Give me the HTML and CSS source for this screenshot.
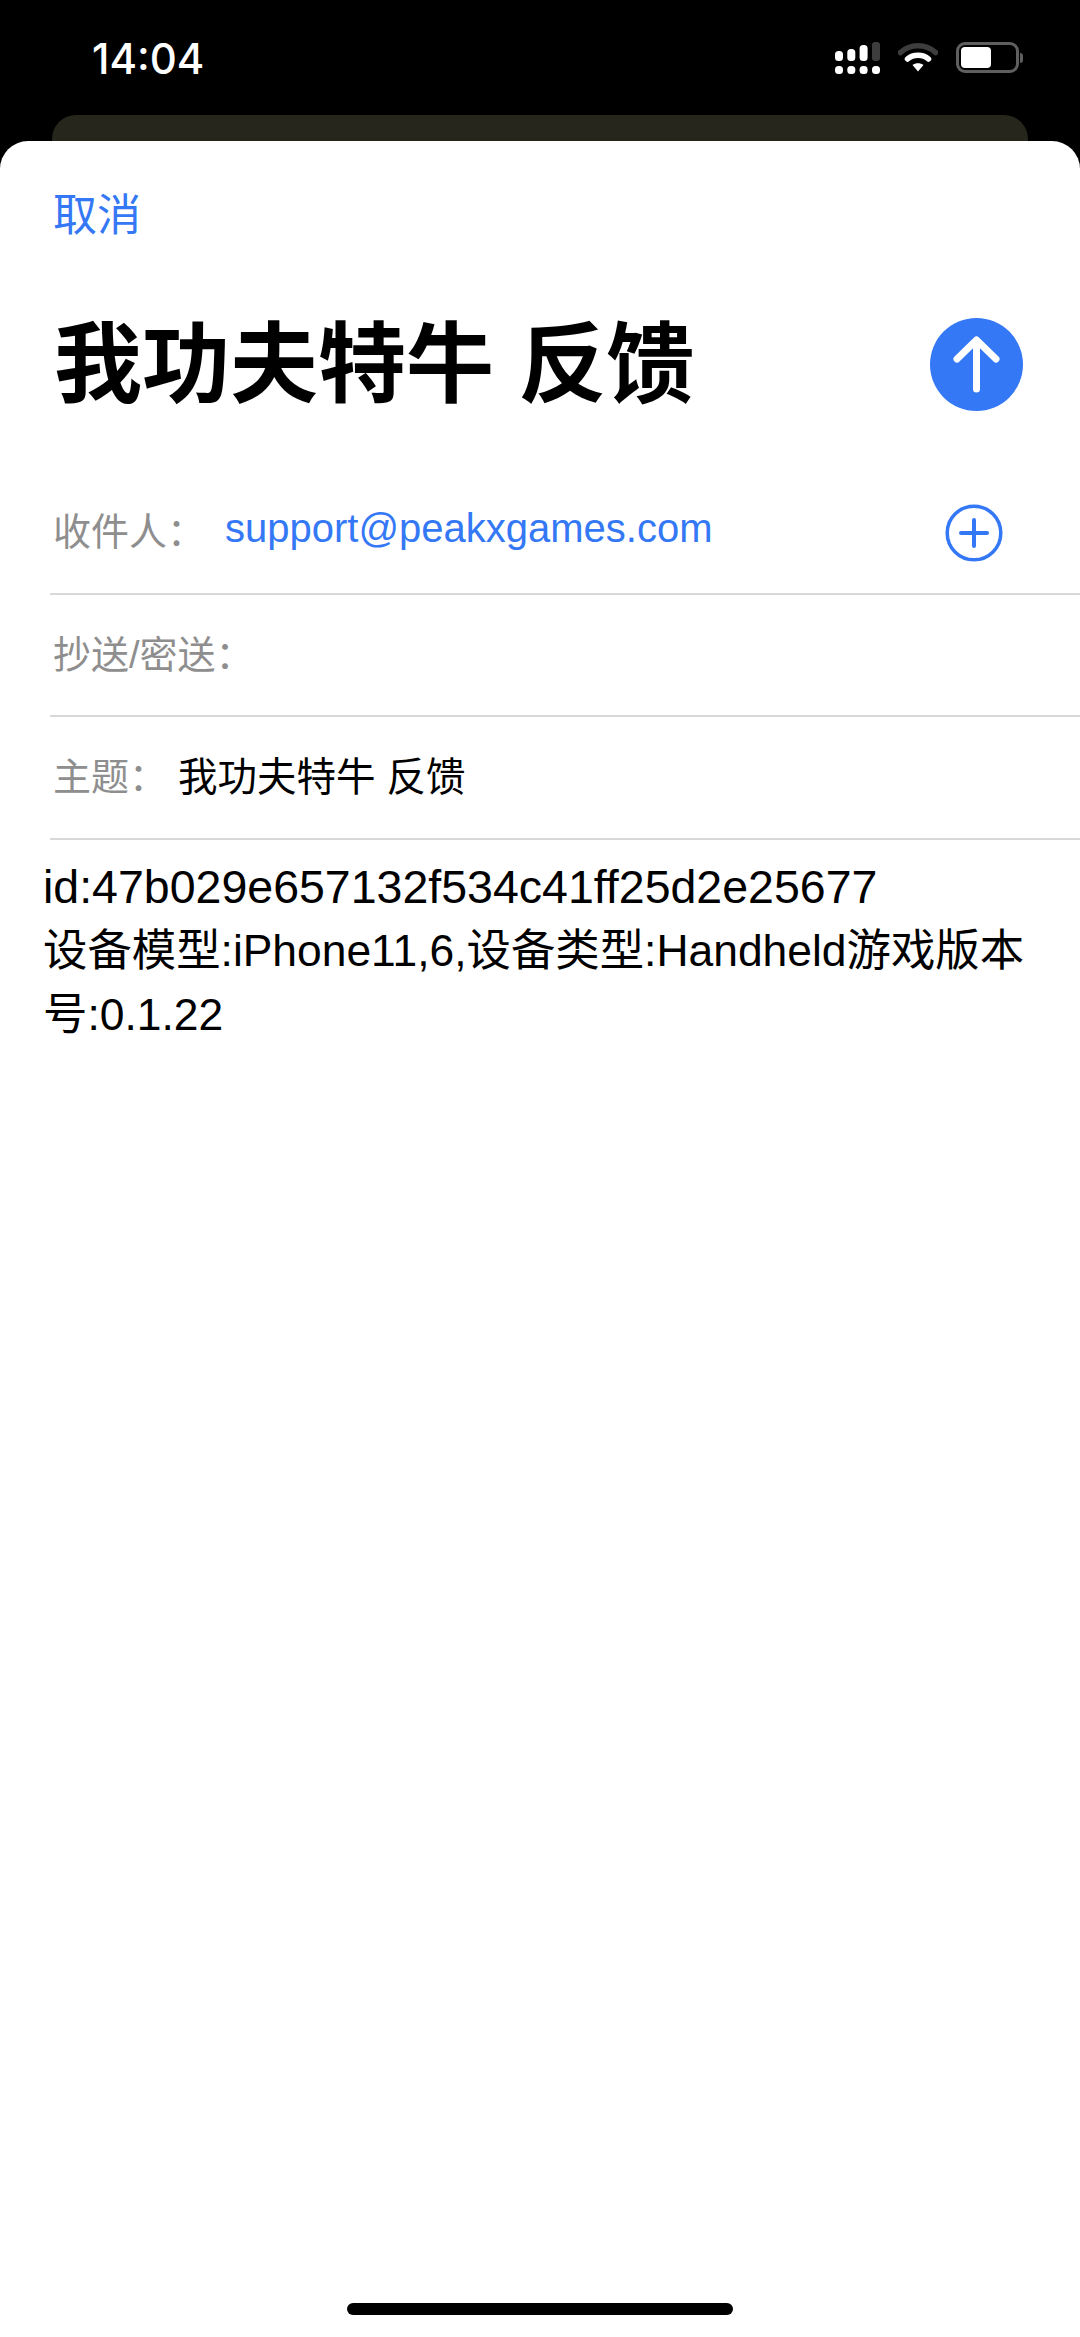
FILE: index.html
```html
<!DOCTYPE html>
<html lang="zh-CN">
<head>
  <meta charset="UTF-8">
  <meta name="viewport" content="width=device-width, initial-scale=1">
  <title>我功夫特牛 反馈</title>
  <link rel="stylesheet" href="styles.css">
</head>
<body>
  <div class="status-bar">
    <span class="clock">14:04</span>
    <div class="status-icons">
      <svg class="signal" width="45" height="32" viewBox="0 0 45 32">
        <rect x="0" y="9" width="8" height="10" rx="3.5" fill="#fff"/>
        <rect x="12.300" y="7" width="8" height="12" rx="3.5" fill="#fff"/>
        <rect x="24.600" y="3" width="8" height="16" rx="3.5" fill="#fff"/>
        <rect x="37" y="0" width="8" height="19" rx="3" fill="#3d3d3d"/>
        <rect x="0" y="24" width="8" height="8" rx="3.5" fill="#fff"/>
        <rect x="12.300" y="24" width="8" height="8" rx="3.5" fill="#fff"/>
        <rect x="24.600" y="24" width="8" height="8" rx="3.5" fill="#fff"/>
        <rect x="37" y="24" width="8" height="8" rx="3.5" fill="#fff"/>
      </svg>
      <svg class="wifi" width="40" height="30" viewBox="0 0 40 30">
        <path d="M2.500 10.500 C12 1.500 28 1.500 37.500 10.500" fill="none" stroke="#3d3d3d" stroke-width="5.500" stroke-linecap="round"/>
        <path d="M9.500 17 C15 12 25 12 30.500 17" fill="none" stroke="#fff" stroke-width="5.500" stroke-linecap="round"/>
        <path d="M14.500 23 C17.500 20.500 22.500 20.500 25.500 23 L20 29.500 Z" fill="#fff"/>
      </svg>
      <div class="battery">
        <div class="battery-body"><div class="battery-level"></div></div>
        <div class="battery-cap"></div>
      </div>
    </div>
  </div>

  <div class="back-card"></div>

  <div class="sheet">
    <div class="cancel">取消</div>

    <div class="title-row">
      <h1>我功夫特牛 反馈</h1>
      <svg class="send" width="93" height="93" viewBox="0 0 93 93">
        <circle cx="46.500" cy="46.500" r="46.500" fill="#3478f6"/>
        <path d="M46.500 71V24M27 41L46.500 22L66 41" fill="none" stroke="#fff" stroke-width="7" stroke-linecap="round" stroke-linejoin="round"/>
      </svg>
    </div>

    <div class="field field-to">
      <span class="label">收件人：</span>
      <span class="address">support@peakxgames.com</span>
      <svg class="add" width="58" height="58" viewBox="0 0 58 58">
        <circle cx="29" cy="29" r="26.800" fill="none" stroke="#3478f6" stroke-width="3.500"/>
        <path d="M29 16V42M16 29H42" fill="none" stroke="#3478f6" stroke-width="4" stroke-linecap="round"/>
      </svg>
    </div>
    <div class="field">
      <span class="label">抄送/密送：</span>
    </div>
    <div class="field">
      <span class="label">主题：</span>
      <span class="subject">我功夫特牛 反馈</span>
    </div>

    <div class="message">
      <div class="device-id">id:47b029e657132f534c41ff25d2e25677</div>
      <div>设备模型:iPhone11,6,设备类型:Handheld游戏版本号:0.1.22</div>
    </div>

    <div class="home-bar"></div>
  </div>
</body>
</html>
```

FILE: styles.css
```css
html, body {
  margin: 0;
  height: 100%;
}
body {
  width: 1080px;
  height: 2337px;
  overflow: hidden;
  background: #000;
  font-family: "Liberation Sans", "Noto Sans CJK SC", sans-serif;
  display: flex;
  flex-direction: column;
}
.status-bar {
  height: 115px;
  flex-shrink: 0;
  box-sizing: border-box;
  padding: 35px 57px 0 92px;
  display: flex;
  justify-content: space-between;
  align-items: flex-start;
}
.clock {
  color: #fff;
  font-size: 42px;
  line-height: 48px;
  font-weight: 500;
  font-family: "Inter", "Liberation Sans", sans-serif;
}
.status-icons {
  display: flex;
  align-items: flex-start;
  gap: 18px;
  padding-top: 7px;
}
.battery {
  display: flex;
  align-items: center;
}
.battery-body {
  width: 63px;
  height: 31px;
  box-sizing: border-box;
  border: 3px solid #5f5f5f;
  border-radius: 9px;
  padding: 2px;
}
.battery-level {
  width: 30px;
  height: 100%;
  background: #fff;
  border-radius: 4px;
}
.battery-cap {
  width: 3px;
  height: 10px;
  background: #5f5f5f;
  border-radius: 0 3px 3px 0;
  margin-left: 1px;
}
.back-card {
  height: 26px;
  flex-shrink: 0;
  margin: 0 52px;
  background: #26261c;
  border-radius: 24px 24px 0 0;
}
.sheet {
  flex: 1;
  background: #fff;
  border-radius: 28px 28px 0 0;
  display: flex;
  flex-direction: column;
}
.cancel {
  color: #3478f6;
  font-size: 44px;
  line-height: 50px;
  padding: 50px 0 0 53px;
}
.title-row {
  display: flex;
  justify-content: space-between;
  align-items: center;
  padding: 77px 57px 0 54px;
  height: 93px;
}
h1 {
  margin: 0;
  font-size: 88px;
  line-height: 93px;
  font-weight: 700;
  color: #000;
}
.field {
  margin-left: 50px;
  height: 122.500px;
  box-sizing: border-box;
  border-bottom: 2px solid #d8d8d8;
  padding: 0 0 7px 3px;
  display: flex;
  align-items: center;
  font-size: 38px;
}
.field-to {
  margin-top: 61px;
}
.label {
  color: #8e8e8e;
}
.address {
  color: #3478f6;
  margin-left: 20px;
  font-size: 40px;
}
.subject {
  color: #000;
  font-size: 39.500px;
  margin-left: 11px;
}
.add {
  margin: 9px 77px 0 auto;
}
.message {
  padding: 16px 50px 0 43px;
  font-size: 44.400px;
  line-height: 63.500px;
  color: #000;
}
.device-id {
  font-size: 46.500px;
}
.home-bar {
  width: 386px;
  height: 12px;
  background: #000;
  border-radius: 6px;
  margin: auto auto 22px;
}
```
